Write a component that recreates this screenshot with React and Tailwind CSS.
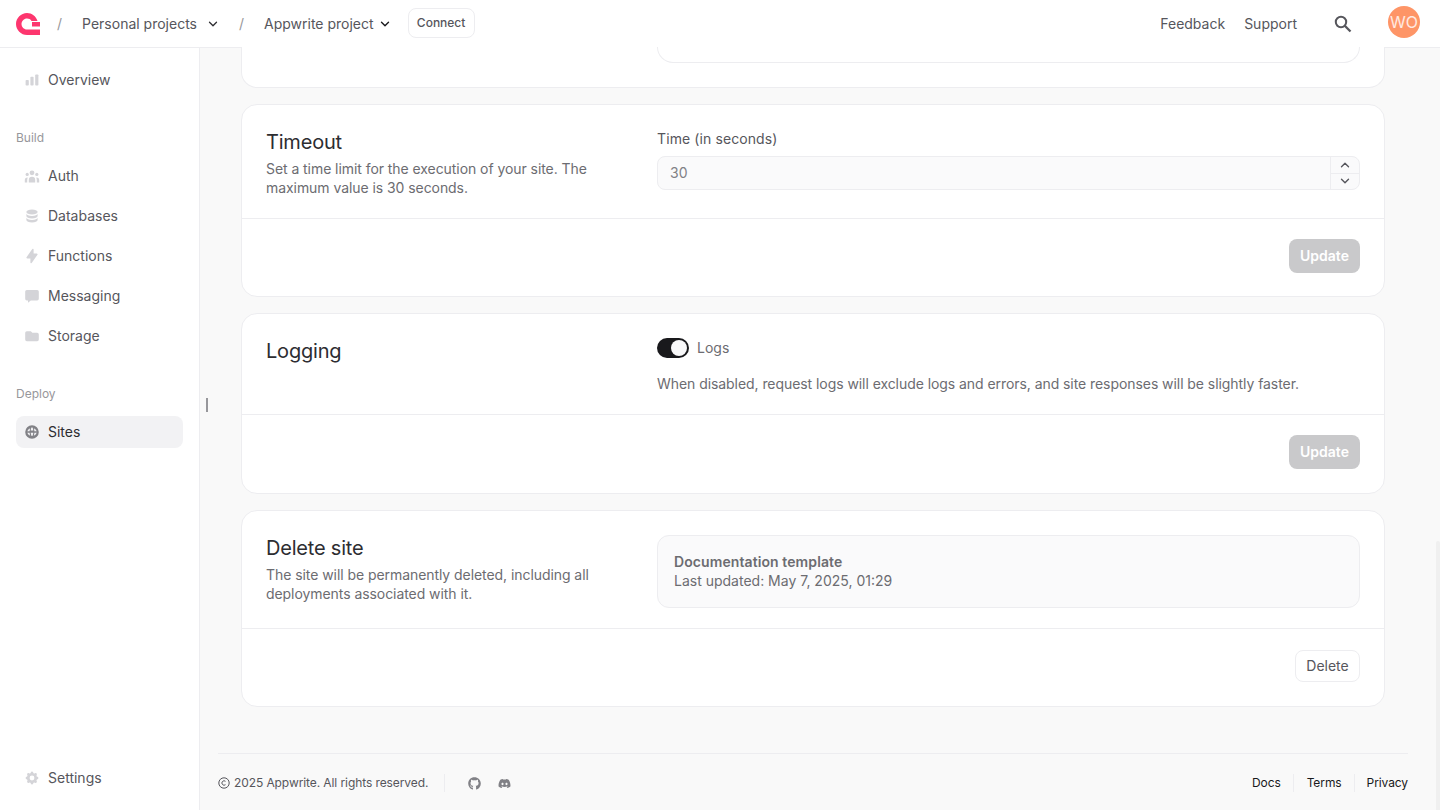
import React from "react";
import { ChevronDown, ChevronUp } from "lucide-react";
import { FaGithub, FaDiscord } from "react-icons/fa";

const Icon = ({ d, cls = "text-[#d4d4d8]" }) => (
  <svg viewBox="0 0 20 20" fill="currentColor" className={`w-[16px] h-[16px] shrink-0 ${cls}`}>
    {d.map((p, i) => <path key={i} d={p} fillRule="evenodd" clipRule="evenodd" />)}
  </svg>
);

const icons = {
  chart: ["M2 11a1 1 0 0 1 1-1h2a1 1 0 0 1 1 1v5a1 1 0 0 1-1 1H3a1 1 0 0 1-1-1v-5Z", "M8 7a1 1 0 0 1 1-1h2a1 1 0 0 1 1 1v9a1 1 0 0 1-1 1H9a1 1 0 0 1-1-1V7Z", "M14 4a1 1 0 0 1 1-1h2a1 1 0 0 1 1 1v12a1 1 0 0 1-1 1h-2a1 1 0 0 1-1-1V4Z"],
  auth: ["M13 6a3 3 0 1 1-6 0 3 3 0 0 1 6 0Z", "M18 8a2 2 0 1 1-4 0 2 2 0 0 1 4 0Z", "M14 15a4 4 0 0 0-8 0v3h8v-3Z", "M6 8a2 2 0 1 1-4 0 2 2 0 0 1 4 0Z", "M16 18v-3a5.97 5.97 0 0 0-.75-2.9A3 3 0 0 1 19 15v3h-3Z", "M4.75 12.1A5.97 5.97 0 0 0 4 15v3H1v-3a3 3 0 0 1 3.75-2.9Z"],
  db: ["M3 12v3c0 1.66 3.13 3 7 3s7-1.34 7-3v-3c0 1.66-3.13 3-7 3s-7-1.34-7-3Z", "M3 7v3c0 1.66 3.13 3 7 3s7-1.34 7-3V7c0 1.66-3.13 3-7 3S3 8.66 3 7Z", "M17 5c0 1.66-3.13 3-7 3S3 6.66 3 5s3.13-3 7-3 7 1.34 7 3Z"],
  bolt: ["M11.3 1.05a1 1 0 0 1 .7.95v5h4a1 1 0 0 1 .82 1.57l-7 10A1 1 0 0 1 8 18v-5H4a1 1 0 0 1-.82-1.57l7-10a1 1 0 0 1 1.12-.38Z"],
  msg: ["M18.500 13.500V4.500a2 2 0 0 0-2-2H3.500a2 2 0 0 0-2 2v9a2 2 0 0 0 2 2H5v3l3.500-3h8a2 2 0 0 0 2-2Z"],
  folder: ["M1.500 6a2 2 0 0 1 2-2h5l2 2h6a2 2 0 0 1 2 2v6.500a2 2 0 0 1-2 2h-13a2 2 0 0 1-2-2V6Z"],
  globe: ["M10 18.500a8.500 8.500 0 1 0 0-17 8.500 8.500 0 0 0 0 17Zm-5.900-7.500h2.930c.07 1.400.3 2.700.68 3.770A6.020 6.020 0 0 1 4.070 11ZM7.030 9H4.070a6.020 6.020 0 0 1 3.640-3.770C7.330 6.300 7.100 7.600 7.030 9ZM10 4c-.2 0-.56.280-.92 1.060-.34.720-.6 1.760-.7 2.940h3.240c-.1-1.180-.36-2.220-.7-2.940C10.560 4.280 10.200 4 10 4Zm-1.620 7c.1 1.180.36 2.220.7 2.940.36.780.72 1.060.92 1.060s.56-.28.92-1.060c.34-.72.6-1.760.7-2.940H8.380Zm3.900 3.770c.38-1.070.61-2.370.68-3.770h2.970a6.020 6.020 0 0 1-3.650 3.770ZM15.930 9h-2.960c-.07-1.400-.3-2.700-.68-3.770A6.020 6.020 0 0 1 15.930 9Z"],
  gear: ["M11.490 3.170c-.38-1.560-2.600-1.560-2.980 0a1.530 1.530 0 0 1-2.290.95c-1.370-.84-2.940.73-2.100 2.100.53.870.06 2-.95 2.290-1.560.38-1.560 2.600 0 2.980a1.530 1.530 0 0 1 .95 2.290c-.84 1.370.73 2.940 2.100 2.100a1.530 1.530 0 0 1 2.290.95c.38 1.560 2.600 1.560 2.980 0a1.530 1.530 0 0 1 2.290-.95c1.370.84 2.940-.73 2.100-2.100a1.530 1.530 0 0 1 .95-2.290c1.560-.38 1.560-2.600 0-2.980a1.530 1.530 0 0 1-.95-2.290c.84-1.370-.73-2.940-2.100-2.100a1.530 1.530 0 0 1-2.290-.95ZM10 13a3 3 0 1 0 0-6 3 3 0 0 0 0 6Z"],
};

const NavItem = ({ icon, label, active }) => (
  <div className={`flex items-center gap-[8px] h-[32px] px-[8px] rounded-[8px] ${active ? "bg-[#f2f2f4] text-[#2d2d31]" : "text-[#56565c]"}`}>
    <Icon d={icons[icon]} cls={active ? "text-[#818186]" : "text-[#d4d4d8]"} />
    <span className="pb-[2px]">{label}</span>
  </div>
);

const Card = ({ title, desc, children, footer, h, bodyH }) => (
  <section className="bg-white border border-[#ededf0] rounded-[16px] flex flex-col" style={{ height: h }}>
    <div className="flex px-[24px] pt-[24px] border-b border-[#ededf0]" style={{ height: bodyH }}>
      <div className="w-[391px] shrink-0">
        <h2 className="text-[20px] leading-[26px] tracking-[-0.2px] text-[#2d2d31]">{title}</h2>
        {desc && <p className="mt-[4px] w-[340px] text-[14px] leading-[19px] tracking-[-0.063px] text-[#6c6c71]">{desc}</p>}
      </div>
      <div className="flex-1">{children}</div>
    </div>
    <div className="flex-1 flex items-center justify-end px-[24px] pb-[4px]">{footer}</div>
  </section>
);

const UpdateBtn = () => (
  <button className="h-[34px] w-[71px] rounded-[8px] bg-[#c9c9cb] text-white text-[14px] leading-[20px] font-semibold">Update</button>
);

export default function App() {
  return (
    <div className="h-[810px] w-[1440px] overflow-hidden flex flex-col bg-[#f9f9f9] font-['Inter',sans-serif] text-[14px] text-[#56565c]">
      <header className="h-[48px] shrink-0 bg-white border-b border-[#ededf0] flex items-center pl-[16px] pr-[20px]">
        <svg viewBox="0 0 24 22" className="w-[24px] h-[22px] shrink-0 text-[#fd366e]" fill="currentColor">
          <path d="M24 16.500V22H11C5 22 0 17 0 11S5 0 11 0c4.800 0 9 3 10.500 8H15.500C14.500 6.200 12.900 5.500 11 5.500 8 5.500 5.500 8 5.500 11S8 16.500 11 16.500H24Z" />
          <rect x="16" y="9" width="8" height="4.500" />
        </svg>
        <span className="ml-[17px] text-[#97979b]">/</span>
        <span className="ml-[20px]">Personal projects</span>
        <ChevronDown className="ml-[9px] w-[14px] h-[14px] text-[#2d2d31]" strokeWidth={2.2} />
        <span className="ml-[19px] text-[#97979b]">/</span>
        <span className="ml-[20px]">Appwrite project</span>
        <ChevronDown className="ml-[4px] w-[14px] h-[14px] text-[#19191c]" strokeWidth={2.4} />
        <button className="ml-[16px] h-[30px] w-[67px] rounded-[8px] border border-[#ededf0] text-[12px] font-medium text-[#56565c] -mt-[1px]">Connect</button>
        <div className="ml-auto flex items-center">
          <span>Feedback</span>
          <span className="ml-[19px]">Support</span>
          <svg viewBox="0 0 18 18" className="ml-[37px] w-[18px] h-[18px] text-[#56565c]" fill="none" stroke="currentColor" strokeWidth="2">
            <circle cx="7" cy="7" r="5.200" />
            <path d="M10.800 10.800 16.500 16.500" strokeWidth="2.300" />
          </svg>
          <div className="ml-[36px] w-[32px] h-[32px] rounded-full bg-[#fe9567] text-white/80 text-[16px] flex items-center justify-center -mt-[3px]">WO</div>
        </div>
      </header>
      <div className="flex-1 flex min-h-0">
        <aside className="w-[200px] shrink-0 bg-white border-r border-[#ededf0] flex flex-col pl-[16px] pr-[16px] pt-[16px] pb-[16px] relative">
          <NavItem icon="chart" label="Overview" />
          <div className="mt-[34px] text-[12px] leading-[16px] text-[#97979b]">Build</div>
          <div className="mt-[14px] flex flex-col gap-[8px]">
            <NavItem icon="auth" label="Auth" />
            <NavItem icon="db" label="Databases" />
            <NavItem icon="bolt" label="Functions" />
            <NavItem icon="msg" label="Messaging" />
            <NavItem icon="folder" label="Storage" />
          </div>
          <div className="mt-[34px] text-[12px] leading-[16px] text-[#97979b]">Deploy</div>
          <div className="mt-[14px]"><NavItem icon="globe" label="Sites" active /></div>
          <div className="mt-auto"><NavItem icon="gear" label="Settings" /></div>
          <div className="absolute left-[206px] top-[350px] w-[2px] h-[14px] bg-[#97979b]" />
        </aside>
        <main className="flex-1 min-w-0 flex flex-col relative">
          <div className="ml-[41px] mr-[55px] -mt-[1px] h-[41px] bg-white border border-t-0 border-[#ededf0] rounded-b-[16px] px-[24px]">
            <div className="ml-[391px] h-[16px] bg-white border border-t-0 border-[#ededf0] rounded-b-[16px]" />
          </div>
          <div className="ml-[41px] mr-[55px] mt-[16px] flex flex-col gap-[16px]">
            <Card title="Timeout" desc="Set a time limit for the execution of your site. The maximum value is 30 seconds." h={193} bodyH={114} footer={<UpdateBtn />}>
              <label className="block leading-[20px] text-[#56565c] font-normal tracking-[0.1px]">Time (in seconds)</label>
              <div className="mt-[7px] h-[34px] rounded-[8px] border border-[#ededf0] bg-[#fafafb] flex items-center">
                <span className="flex-1 pl-[12px] pb-[1px] text-[#818186]">30</span>
                <div className="w-[29px] h-full border-l border-[#ededf0] flex flex-col">
                  <div className="flex-1 border-b border-[#ededf0] flex items-center justify-center"><ChevronUp className="w-[14px] h-[14px]" strokeWidth={2.4} /></div>
                  <div className="flex-1 flex items-center justify-center"><ChevronDown className="w-[14px] h-[14px]" strokeWidth={2.4} /></div>
                </div>
              </div>
            </Card>
            <Card title="Logging" h={181} bodyH={101} footer={<UpdateBtn />}>
              <div className="flex items-center gap-[8px] h-[20px]">
                <div className="w-[32px] h-[20px] rounded-full bg-[#19191c] flex items-center justify-end pr-[2px]">
                  <div className="w-[16px] h-[16px] rounded-full bg-[#f9f9fa]" />
                </div>
                <span className="pb-[2px] text-[#6c6c71]">Logs</span>
              </div>
              <p className="mt-[16px] leading-[20px] tracking-[-0.063px] text-[#6c6c71]">When disabled, request logs will exclude logs and errors, and site responses will be slightly faster.</p>
            </Card>
            <Card title="Delete site" desc="The site will be permanently deleted, including all deployments associated with it." h={197} bodyH={118} footer={<button className="h-[32px] w-[65px] rounded-[8px] border border-[#ededf0] bg-white font-normal text-[#56565c]">Delete</button>}>
              <div className="h-[73px] rounded-[12px] border border-[#ededf0] bg-[#fafafb] px-[16px] pb-[2px] flex flex-col justify-center leading-[19px]">
                <div className="font-semibold tracking-[0.09px] text-[#6c6c71]">Documentation template</div>
                <div className="text-[#6c6c71]">Last updated: May 7, 2025, 01:29</div>
              </div>
            </Card>
          </div>
          <footer className="absolute left-[18px] right-[32px] top-[705px] h-[57px] border-t border-[#ededf0] flex items-center text-[12px] pt-[2px] tracking-[-0.09px]">
            <svg viewBox="0 0 12 12" className="w-[12px] h-[12px] mr-[4px]" fill="none" stroke="currentColor" strokeWidth="1"><circle cx="6" cy="6" r="5.200" /><path d="M7.500 4.300A2.200 2.200 0 1 0 7.500 7.700" /></svg>
            <span>2025 Appwrite. All rights reserved.</span>
            <div className="ml-[16px] w-px h-[18px] bg-[#ededf0]" />
            <FaGithub className="ml-[23px] w-[13px] h-[13px] text-[#818186]" />
            <FaDiscord className="ml-[17px] w-[13px] h-[13px] text-[#818186]" />
            <div className="ml-auto flex items-center text-[#19191c]">
              <span>Docs</span>
              <div className="ml-[12px] mr-[13px] w-px h-[18px] bg-[#ededf0]" />
              <span>Terms</span>
              <div className="ml-[12px] mr-[12px] w-px h-[18px] bg-[#ededf0]" />
              <span>Privacy</span>
            </div>
          </footer>
          <div className="absolute right-0 top-[493px] bottom-0 w-[4px] bg-[#f0f0f0] rounded-t-[2px]" />
        </main>
      </div>
    </div>
  );
}
